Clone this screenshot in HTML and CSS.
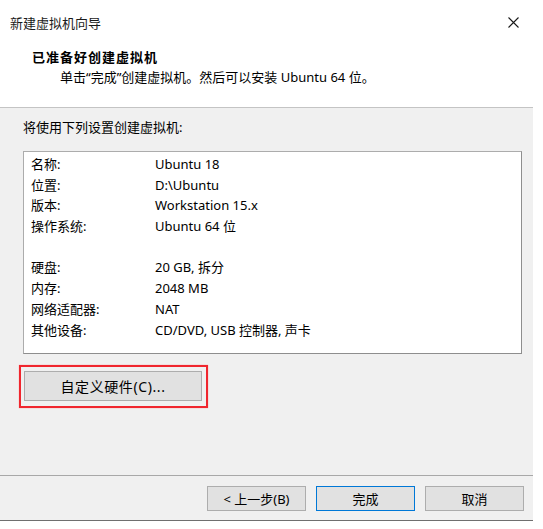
FILE: index.html
```html
<!DOCTYPE html>
<html lang="zh-CN">
<head>
    <meta charset="UTF-8">
    <title>新建虚拟机向导</title>
    <link rel="stylesheet" href="styles.css">
</head>
<body>
    <div class="wizard">
        <div class="wizard-header">
            <div class="titlebar">
                <span class="title">新建虚拟机向导</span>
                <svg class="close-icon" width="11" height="11" viewBox="0 0 11 11">
                    <path d="M0.5 0.5 L10.5 10.5 M10.5 0.5 L0.5 10.5" stroke="#1a1a1a" stroke-width="1.1" fill="none"/>
                </svg>
            </div>
            <div class="intro">
                <div class="intro-heading">已准备好创建虚拟机</div>
                <div class="intro-text">单击“完成”创建虚拟机。然后可以安装 Ubuntu 64 位。</div>
            </div>
        </div>

        <div class="wizard-body">
            <div class="summary-label">将使用下列设置创建虚拟机:</div>
            <div class="summary-box">
                <div class="summary-row"><span>名称:</span><span>Ubuntu 18</span></div>
                <div class="summary-row"><span>位置:</span><span>D:\Ubuntu</span></div>
                <div class="summary-row"><span>版本:</span><span>Workstation 15.x</span></div>
                <div class="summary-row"><span>操作系统:</span><span>Ubuntu 64 位</span></div>
                <div class="summary-row"></div>
                <div class="summary-row"><span>硬盘:</span><span>20 GB, 拆分</span></div>
                <div class="summary-row"><span>内存:</span><span>2048 MB</span></div>
                <div class="summary-row"><span>网络适配器:</span><span>NAT</span></div>
                <div class="summary-row"><span>其他设备:</span><span>CD/DVD, USB 控制器, 声卡</span></div>
            </div>
            <div class="highlight">
                <button class="btn custom-btn">自定义硬件(C)...</button>
            </div>
        </div>

        <div class="wizard-footer">
            <button class="btn">&lt; 上一步(B)</button>
            <button class="btn default-btn">完成</button>
            <button class="btn">取消</button>
        </div>
    </div>
</body>
</html>
```

FILE: styles.css
```css
body {
    margin: 0;
    background-color: #fff;
    font-family: "Noto Sans", "Noto Sans CJK SC", sans-serif;
    font-size: 13px;
    color: #000;
}
.wizard {
    width: 533px;
}
.wizard-header {
    height: 108px;
    box-sizing: border-box;
    border-bottom: 1px solid #c4c4c4;
    background-color: #fff;
}
.titlebar {
    display: flex;
    justify-content: space-between;
    align-items: center;
    height: 44px;
    padding: 0 14px 0 10px;
}
.title {
    font-size: 13px;
    color: #1a1a1a;
}
.intro {
    padding-left: 32px;
    margin-top: 3px;
}
.intro-heading {
    font-weight: bold;
    line-height: 20px;
    letter-spacing: 1px;
}
.intro-text {
    line-height: 20px;
    padding-left: 28px;
}
.wizard-body {
    height: 368px;
    box-sizing: border-box;
    padding: 10px 11px 0 23px;
    background-color: #f0f0f0;
    border-bottom: 1px solid #a8a8a8;
}
.summary-label {
    line-height: 18px;
    margin-bottom: 15px;
}
.summary-box {
    height: 203px;
    box-sizing: border-box;
    padding: 2px 7px 0;
    background-color: #fff;
    border: 1px solid #acacac;
    border-right-color: #8e8e8e;
    border-bottom-color: #8e8e8e;
}
.summary-row {
    display: grid;
    grid-template-columns: 124px 1fr;
    height: 20.7px;
    line-height: 20.7px;
}
.highlight {
    display: inline-block;
    margin: 11px 0 0 -4px;
    padding: 4px 4px 5px 3px;
    border: 2px solid #f0262e;
    box-shadow: 0 0 1px #ff8a8a;
}
.btn {
    font-family: "Noto Sans", "Noto Sans CJK SC", sans-serif;
    font-size: 13px;
    color: #000;
    background-color: #e1e1e1;
    border: 1px solid #adadad;
    padding: 0;
    height: 25px;
    width: 99px;
}
.custom-btn {
    width: 178px;
    height: 30px;
    font-size: 14px;
    letter-spacing: 0.6px;
}
.default-btn {
    border-color: #0078d7;
}
.wizard-footer {
    display: flex;
    justify-content: flex-end;
    gap: 10px;
    height: 45px;
    box-sizing: border-box;
    padding: 10px 9px 0 0;
    background-color: #f0f0f0;
    border-bottom: 1px solid #6f6f6f;
}
```
